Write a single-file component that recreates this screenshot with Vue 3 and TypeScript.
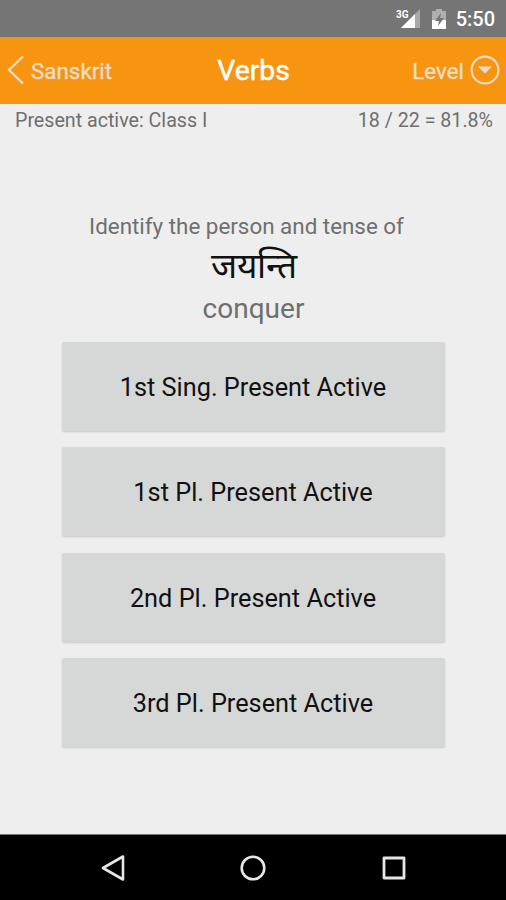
<script setup lang="ts">
const answers: string[] = [
  '1st Sing. Present Active',
  '1st Pl. Present Active',
  '2nd Pl. Present Active',
  '3rd Pl. Present Active',
]
</script>

<template>
  <div class="screen">
    <div class="status">
      <svg class="signal" width="27" height="20" viewBox="0 0 27 20">
        <path d="M24 0V19H5Z" fill="#a9a9a9" />
        <path d="M19 5V19H5Z" fill="#fff" />
        <text x="0" y="8.5" class="net">3G</text>
      </svg>
      <svg class="battery" width="14" height="20" viewBox="0 0 14 20">
        <path d="M4 0h6v2h4v9H0V2h4z" fill="#b0b0b0" />
        <path d="M0 11h14v9H0z" fill="#fff" />
        <path d="M9 4 3 12h4l-1 5 6-8H8z" fill="#757575" />
      </svg>
      <span class="time">5:50</span>
    </div>
    <header class="bar">
      <div class="back">
        <svg width="17" height="30" viewBox="0 0 17 30"><path d="M16 1.500 2 15 16 28.500" fill="none" stroke="#ecdcc6" stroke-width="2.4" /></svg>
        <span>Sanskrit</span>
      </div>
      <h1>Verbs</h1>
      <div class="level">
        <span>Level</span>
        <svg width="30" height="30" viewBox="0 0 30 30"><circle cx="15" cy="15" r="13.400" fill="none" stroke="#ecdcc6" stroke-width="2.1" /><path d="M8 11.500h14l-7 7z" fill="#e2dcd4" /></svg>
      </div>
    </header>
    <div class="info"><span>Present active: Class I</span><span class="score">18 / 22 = 81.8%</span></div>
    <main>
      <p class="prompt">Identify the person and tense of</p>
      <p class="word">जयन्ति</p>
      <p class="meaning">conquer</p>
      <div class="answers">
        <button v-for="a in answers" :key="a"><span>{{ a }}</span></button>
      </div>
    </main>
    <nav>
      <svg width="26" height="28" viewBox="0 0 26 28"><path d="M23 2.500V25.500L3 14Z" fill="none" stroke="#e6e6e6" stroke-width="2.6" stroke-linejoin="round" /></svg>
      <svg width="28" height="28" viewBox="0 0 28 28"><circle cx="14" cy="14" r="11.300" fill="none" stroke="#e6e6e6" stroke-width="2.6" /></svg>
      <svg width="28" height="28" viewBox="0 0 28 28"><path d="M4 4h20v20H4z" fill="none" stroke="#e6e6e6" stroke-width="2.8" stroke-linejoin="round" /></svg>
    </nav>
  </div>
</template>

<style>
body { margin: 0; }
</style>
<style scoped>
.screen { width: 506px; height: 900px; display: flex; flex-direction: column; background: #eee; font-family: Roboto, sans-serif; overflow: hidden; }
.status { height: 36.5px; flex: none; box-sizing: border-box; background: #757575; display: flex; align-items: center; justify-content: flex-end; padding: 1px 11px 0 0; color: #fff; }
.net { font: bold 10px Roboto, sans-serif; fill: #fff; }
.battery { margin: 0 10px 0 9px; }
.time { font-size: 20px; font-weight: 500; padding-top: 1px; }
.bar { height: 67.5px; flex: none; background: #f79510; display: grid; grid-template-columns: 1fr auto 1fr; align-items: center; color: #ecdcc6; font-size: 22.4px; padding: 0 6px 0 7px; box-sizing: border-box; }
.back, .level { display: flex; align-items: center; }
.back span, .level span { padding-top: 1px; -webkit-text-stroke: .4px currentColor; }
.back { gap: 7px; }
.level { justify-content: flex-end; gap: 6px; }
h1 { margin: 0; padding-top: 1px; font-size: 28.3px; font-weight: 400; -webkit-text-stroke: .5px currentColor; color: #fff; }
.info { display: flex; justify-content: space-between; padding: 4px 13px 0 15px; font-size: 19.65px; line-height: 25px; color: #6f6f6f; flex: none; height: 24px; }
main { flex: 1; display: flex; flex-direction: column; align-items: center; padding-top: 79px; }
p { margin: 0; white-space: nowrap; }
.prompt { font-size: 22.4px; line-height: 31px; color: #6f6f6f; padding-right: 13px; }
.word { font-size: 35.3px; line-height: 46px; color: #111; padding: 1px 0 0 1px; }
.meaning { font-size: 28px; line-height: 40px; color: #6f6f6f; padding-left: 1px; }
.answers { width: 383px; display: flex; flex-direction: column; gap: 16.5px; margin-top: 12.6px; }
button { height: 89px; border: 0; border-radius: 2px; padding: 2px 0 0; background: #d6d8d7; box-shadow: 0 1px 2px rgba(0,0,0,.16); font: 25.3px Roboto, sans-serif; color: #111; }
nav { height: 66px; flex: none; box-sizing: border-box; background: #000; border-top: 1px solid #777; display: flex; align-items: center; justify-content: center; gap: 113px; padding: 1px 0 0 2px; }
</style>
